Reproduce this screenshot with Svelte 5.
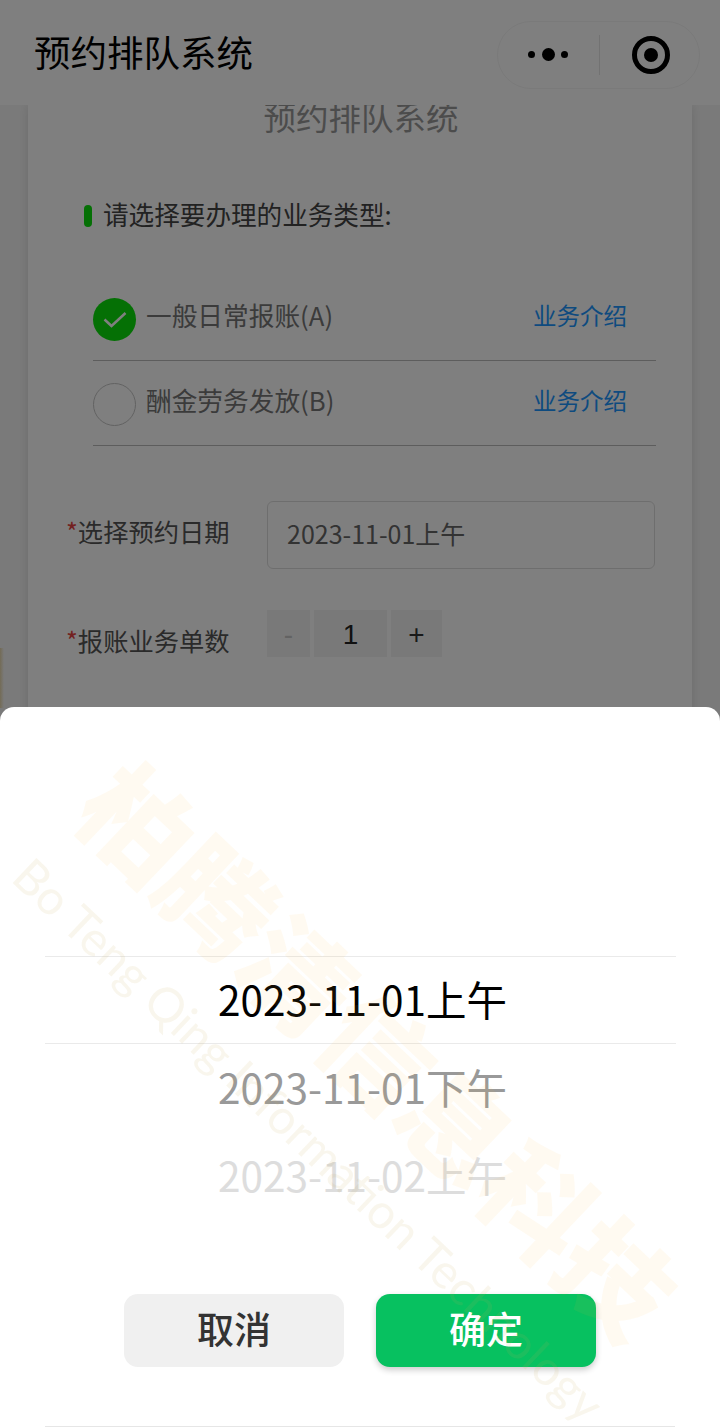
<script lang="ts">
    const services = [
        { name: "一般日常报账(A)", checked: true },
        { name: "酬金劳务发放(B)", checked: false },
    ];
    const options = [
        { label: "2023-11-01上午", cls: "sel" },
        { label: "2023-11-01下午", cls: "near" },
        { label: "2023-11-02上午", cls: "far" },
    ];
</script>

<div class="page">
    <header class="nav">
        <h1>预约排队系统</h1>
        <div class="capsule">
            <div class="more"><i></i><i class="big"></i><i></i></div>
            <div class="divider"></div>
            <div class="close"><span></span></div>
        </div>
    </header>

    <main class="card">
        <h2>预约排队系统</h2>
        <div class="section"><span class="bar"></span><span class="section-text">请选择要办理的业务类型:</span></div>

        <ul class="services">
            {#each services as s}
                <li>
                    <span class="radio" class:checked={s.checked}>
                        {#if s.checked}
                            <svg width="24" height="17" viewBox="0 0 24 17">
                                <path d="M1.5 8.5 L8.5 15 L22.5 2" fill="none" stroke="#fff" stroke-width="2.5" />
                            </svg>
                        {/if}
                    </span>
                    <span class="name">{s.name}</span>
                    <span class="link">业务介绍</span>
                </li>
            {/each}
        </ul>

        <div class="field date">
            <label for="date"><em>*</em>选择预约日期</label>
            <div class="input" id="date">2023-11-01上午</div>
        </div>

        <div class="field count">
            <span class="lbl"><em>*</em>报账业务单数</span>
            <div class="stepper">
                <span class="minus">-</span>
                <span class="val">1</span>
                <span class="plus">+</span>
            </div>
        </div>
    </main>

    <div class="edge"></div>
    <div class="mask"></div>

    <section class="sheet">
        <div class="picker">
            {#each options as o}
                <div class="opt {o.cls}"><span>{o.label}</span></div>
            {/each}
        </div>
        <div class="actions">
            <button class="cancel">取消</button>
            <button class="ok">确定</button>
        </div>
        <div class="endline"></div>

        <div class="wm wm-cn">柏腾清信息科技</div>
        <div class="wm wm-en">Bo Teng Qing Information Technology</div>
    </section>
</div>

<style>
    :global(body) {
        margin: 0;
        background: #f5f5f5;
    }
    .page {
        position: relative;
        width: 720px;
        height: 1428px;
        overflow: hidden;
        background: #f5f5f5;
        font-family: "Noto Sans CJK SC", "Noto Sans", sans-serif;
        color: #333;
    }
    .nav {
        height: 105px;
        background: #fff;
        display: flex;
        align-items: center;
        justify-content: space-between;
        padding: 4px 20px 0 34px;
        box-sizing: border-box;
        position: relative;
        z-index: 1;
    }
    h1 {
        margin: 0 0 4px;
        font-size: 36.5px;
        font-weight: 400;
        color: #000;
        line-height: 1;
    }
    .capsule {
        width: 203px;
        height: 68px;
        box-sizing: border-box;
        border: 1px solid #f4f4f4;
        border-radius: 34px;
        display: flex;
        align-items: center;
        padding-left: 30px;
    }
    .more {
        width: 40px;
        display: flex;
        align-items: center;
        justify-content: space-between;
    }
    .more i {
        width: 7px;
        height: 7px;
        border-radius: 50%;
        background: #000;
    }
    .more i.big {
        width: 13px;
        height: 13px;
    }
    .divider {
        width: 1px;
        height: 40px;
        background: #e4e4e4;
        margin-left: 31px;
    }
    .close {
        width: 38px;
        height: 38px;
        box-sizing: border-box;
        border: 5px solid #000;
        border-radius: 50%;
        margin-left: 32px;
        display: flex;
        align-items: center;
        justify-content: center;
    }
    .close span {
        width: 14px;
        height: 14px;
        border-radius: 50%;
        background: #000;
    }

    .card {
        margin: 0 28px;
        height: 640px;
        background: #fff;
        box-shadow: 0 0 10px rgba(0, 0, 0, 0.12);
        padding: 0 36px 0 38px;
        box-sizing: border-box;
    }
    h2 {
        margin: 0;
        height: 72px;
        line-height: 22px;
        text-align: center;
        font-size: 32.5px;
        font-weight: 400;
        color: #999;
    }
    .section {
        display: flex;
        align-items: center;
        margin-left: 18px;
        height: 36px;
        margin-top: 21px;
        font-size: 25.6px;
        color: #444;
    }
    .section-text {
        margin-bottom: 6px;
    }
    .bar {
        width: 8px;
        height: 22px;
        border-radius: 4px;
        background: #0be00b;
        margin-right: 11px;
    }
    .services {
        list-style: none;
        margin: 42px 0 0 27px;
        padding: 0;
    }
    .services li {
        height: 85px;
        box-sizing: border-box;
        padding-top: 2px;
        border-bottom: 1px solid #bbb;
        display: flex;
        align-items: center;
        gap: 10px;
        padding-right: 29px;
    }
    .radio {
        width: 43px;
        height: 43px;
        box-sizing: border-box;
        border-radius: 50%;
        border: 1px solid #c4c4c4;
        display: flex;
        align-items: center;
        justify-content: center;
    }
    .radio.checked {
        background: #0be00b;
        border: none;
    }
    .name {
        flex: 1;
        font-size: 25.7px;
        color: #777;
        margin-bottom: 10px;
    }
    .link {
        font-size: 23.5px;
        color: #1c96ff;
        margin-bottom: 9px;
    }
    .field {
        display: flex;
    }
    em {
        font-style: normal;
        color: #e64340;
    }
    .date {
        margin-top: 55px;
        align-items: center;
    }
    .date label,
    .lbl {
        width: 201px;
        font-size: 25.3px;
        white-space: nowrap;
        color: #555;
    }
    .date label {
        margin-bottom: 8px;
    }
    .input {
        width: 388px;
        height: 68px;
        box-sizing: border-box;
        border: 1px solid #ddd;
        border-radius: 6px;
        padding: 0 0 4px 19px;
        display: flex;
        align-items: center;
        font-size: 25px;
        color: #666;
    }
    .count {
        margin-top: 41px;
    }
    .lbl {
        padding-top: 12px;
    }
    .stepper {
        display: flex;
        gap: 4px;
        height: 47px;
    }
    .stepper span {
        background: #f3f3f3;
        box-sizing: border-box;
        padding-top: 3px;
        display: flex;
        align-items: center;
        justify-content: center;
        font-size: 28px;
        font-family: "Liberation Sans", sans-serif;
    }
    .minus {
        width: 43px;
        color: #c6c6c6;
    }
    .val {
        width: 73px;
        color: #222;
    }
    .plus {
        width: 51px;
        color: #333;
    }

    .edge {
        position: absolute;
        left: 0;
        top: 648px;
        width: 4px;
        height: 60px;
        background: linear-gradient(90deg, #e6d6ac, #f5f5f5);
    }
    .mask {
        position: absolute;
        inset: 0;
        background: rgba(0, 0, 0, 0.5);
        z-index: 2;
    }

    .sheet {
        position: absolute;
        left: 0;
        right: 0;
        top: 707px;
        bottom: 0;
        z-index: 3;
        background: #fff;
        border-radius: 14px 14px 0 0;
        overflow: hidden;
    }
    .picker {
        margin: 249px 44px 0 45px;
        height: 338px;
    }
    .opt {
        height: 88px;
        box-sizing: border-box;
        display: flex;
        align-items: center;
        justify-content: center;
        font-size: 40.5px;
        font-weight: 400;
    }
    .opt span {
        margin: 0 0 4px 4px;
    }
    .opt.sel {
        color: #000;
        border-top: 1px solid #eaeaea;
        border-bottom: 1px solid #eaeaea;
    }
    .opt.near {
        color: #999;
    }
    .opt.far {
        color: #ddd;
    }
    .actions {
        display: flex;
        justify-content: center;
        gap: 32px;
    }
    button {
        width: 220px;
        height: 73px;
        border: none;
        border-radius: 14px;
        padding: 0 0 6px;
        font-family: inherit;
        font-size: 37px;
        font-weight: 500;
    }
    .cancel {
        background: #f0f0f0;
        color: #333;
    }
    .ok {
        background: #07c160;
        color: #fff;
        box-shadow: 0 3px 6px rgba(0, 0, 0, 0.2);
    }
    .endline {
        margin: 59px 45px 0;
        height: 1px;
        background: #e6e6e6;
    }
    .wm {
        position: absolute;
        white-space: nowrap;
        pointer-events: none;
        transform-origin: 0 50%;
        transform: rotate(43.5deg);
    }
    .wm-cn {
        left: 102px;
        top: 20px;
        font-size: 110px;
        font-weight: 900;
        line-height: 110px;
        color: rgba(255, 190, 60, 0.07);
    }
    .wm-en {
        left: 22px;
        top: 136px;
        font-family: "Lato", sans-serif;
        font-size: 48px;
        line-height: 48px;
        color: rgba(200, 170, 90, 0.11);
    }
</style>
